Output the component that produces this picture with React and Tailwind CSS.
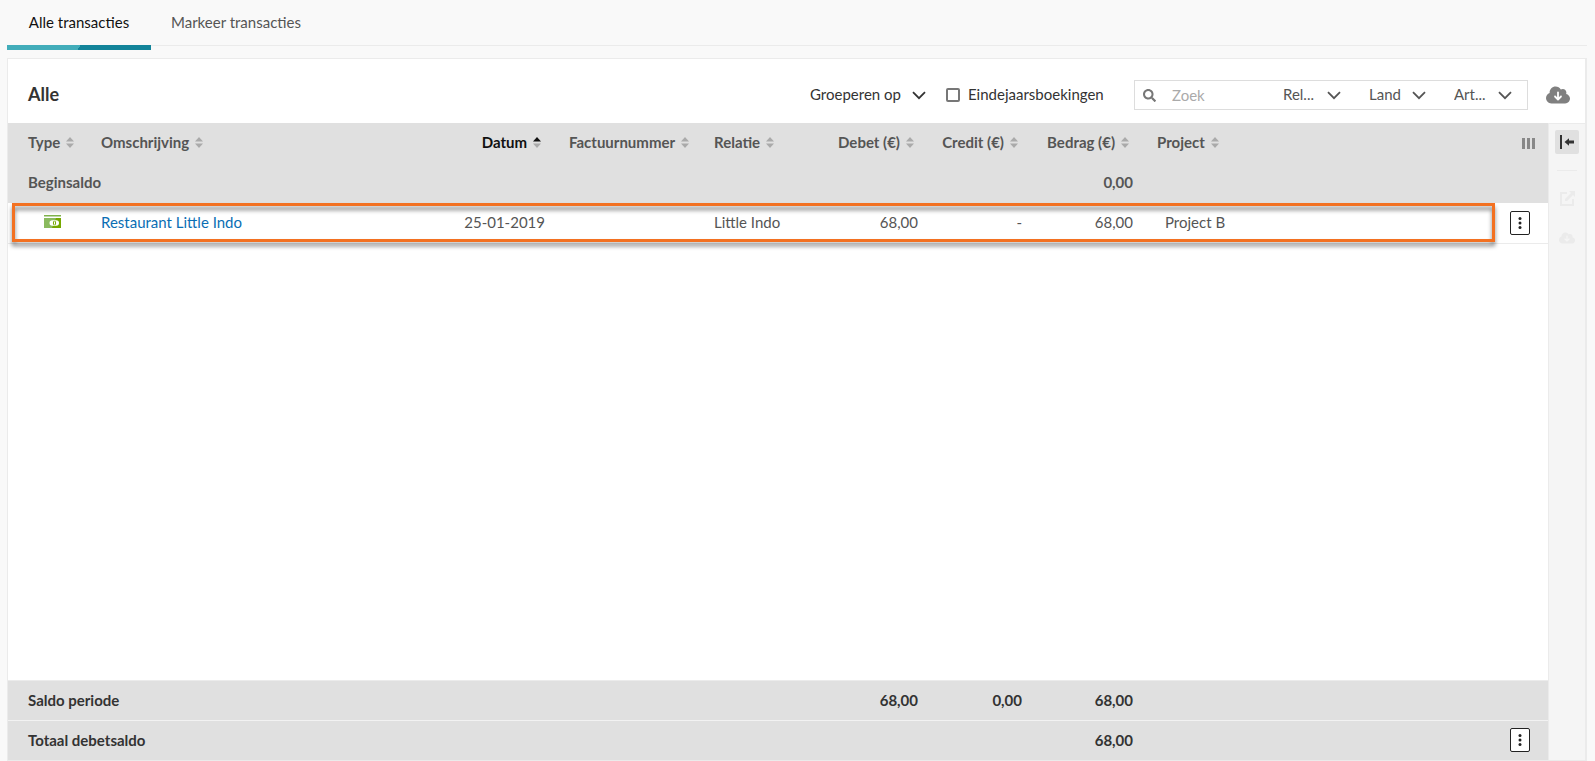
import React from 'react';
import { FaSearch } from 'react-icons/fa';
import { FaCloudArrowDown } from 'react-icons/fa6';

const columns = [
    { label: 'Type', first: true },
    { label: 'Omschrijving' },
    { label: 'Datum', right: true, sorted: true },
    { label: 'Factuurnummer' },
    { label: 'Relatie' },
    { label: 'Debet (€)', right: true },
    { label: 'Credit (€)', right: true },
    { label: 'Bedrag (€)', right: true },
    { label: 'Project' },
];

const Chevron = ({ className = '' }) => (
    <svg viewBox="0 0 14 9" className={`w-[14px] h-[9px] pointer-events-none ${className}`} fill="none" stroke="currentColor" strokeWidth="1.8">
        <path d="M1 1.2 7 7.2 13 1.2" />
    </svg>
);

const SortIcon = ({ sorted }) => (
    <svg viewBox="0 0 8 11" className="w-2 h-[11px] shrink-0">
        <path d="M4 0 8 4.6H0Z" fill={sorted ? '#111' : '#aaa'} />
        <path d="M4 11 8 6.4H0Z" fill="#aaa" />
    </svg>
);

// Banknote icon for cash transactions
const CashIcon = () => (
    <svg viewBox="0 0 17 13" className="w-[17px] h-[13px] ml-4" role="img" aria-label="Kas">
        <rect width="17" height="1.5" fill="#7fb24c" />
        <rect y="3" width="17" height="10" fill="#8aba5e" />
        <path d="M17 3v10H8L12 3Z" fill="#76a800" />
        <rect x="5.5" y="5.2" width="9.5" height="5.6" rx="2.8" fill="#fff" />
        <ellipse cx="10.5" cy="8" rx="1.6" ry="2.2" fill="#76a800" />
        <path d="M10 6.5h1v3h-1Z" fill="#fff" />
    </svg>
);

const MoreButton = () => (
    <button aria-label="Meer acties" className="flex items-center justify-center w-5 h-6 bg-white border border-[#222] rounded-xs cursor-pointer">
        <svg viewBox="0 0 4 12" className="w-1 h-3" fill="#222">
            <circle cx="2" cy="1.6" r="1.5" />
            <circle cx="2" cy="6" r="1.5" />
            <circle cx="2" cy="10.4" r="1.5" />
        </svg>
    </button>
);

const Filter = ({ label, text, className }) => (
    <div className={`relative flex items-center ${className}`}>
        <select aria-label={label} className="appearance-none w-full pb-0.5 bg-transparent focus:outline-none cursor-pointer">
            <option>{text}</option>
        </select>
        <Chevron className="absolute right-0" />
    </div>
);

const Columns = () => (
    <colgroup>
        <col className="w-[81px]" />
        <col className="w-[368px]" />
        <col className="w-[100px]" />
        <col className="w-[145px]" />
        <col className="w-[124px]" />
        <col className="w-[104px]" />
        <col className="w-[104px]" />
        <col className="w-[111px]" />
        <col />
        <col className="w-[58px]" />
    </colgroup>
);

const Tabs = () => (
    <nav className="flex h-[50px] ml-[7px] mr-2">
        <button className="relative px-5 pb-1.5 w-[144px] text-[#111] whitespace-nowrap cursor-pointer">
            Alle transacties
            <span className="absolute left-0 bottom-0 w-full h-[5px] bg-[linear-gradient(120deg,#42adba_50%,#13849a_50%)]"></span>
        </button>
        <div className="flex-1 flex h-[46px] border-b border-[#ebebeb]">
            <button className="px-5 pb-0.5 text-[#555] cursor-pointer">Markeer transacties</button>
        </div>
    </nav>
);

const Toolbar = () => (
    <div className="flex items-center h-16 pl-5 pr-[15px] pt-2 text-[#333]">
        <h1 className="text-lg font-bold leading-5 mr-auto pb-0.5">Alle</h1>
        <Filter label="Groeperen op" text="Groeperen op" className="w-[116px] mr-5" />
        <label className="flex items-center gap-2 mr-7">
            <input type="checkbox" className="appearance-none w-[14px] h-[14px] border-2 border-[#777] rounded-xs checked:bg-[#777]" />
            <span className="w-[138px] pb-0.5">Eindejaarsboekingen</span>
        </label>
        <div className="flex items-center h-[30px] w-[394px] pl-2 pr-[15px] border border-[#ddd] text-[#555]">
            <FaSearch size={13} className="text-[#777] shrink-0" />
            <input type="text" aria-label="Zoek" placeholder="Zoek" className="flex-1 min-w-0 px-4 placeholder-[#aaa] focus:outline-none" />
            <div className="flex gap-7">
                <Filter label="Relatie" text="Rel..." className="w-[58px]" />
                <Filter label="Land" text="Land" className="w-[57px]" />
                <Filter label="Artikel" text="Art..." className="w-[58px]" />
            </div>
        </div>
        <button aria-label="Downloaden" className="ml-[18px] text-[#808080] cursor-pointer">
            <FaCloudArrowDown size={24} />
        </button>
    </div>
);

const Transactions = () => (
    <table className="w-full table-fixed text-left whitespace-nowrap">
        <Columns />
        <thead className="bg-[#e0e0e0] text-[#555] font-bold">
            <tr className="h-10">
                {columns.map((col) => (
                    <th key={col.label} scope="col" className={col.first ? 'pl-5' : 'px-3'}>
                        <button className={`flex items-center gap-1.5 pb-0.5 cursor-pointer ${col.right ? 'ml-auto mr-1' : ''} ${col.sorted ? 'text-[#111]' : ''}`}>
                            {col.label}
                            <SortIcon sorted={col.sorted} />
                        </button>
                    </th>
                ))}
                <th scope="col">
                    <button aria-label="Kolommen" className="flex gap-[2px] ml-8 cursor-pointer">
                        <span className="w-[3px] h-[11px] bg-[#888]"></span>
                        <span className="w-[3px] h-[11px] bg-[#888]"></span>
                        <span className="w-[3px] h-[11px] bg-[#888]"></span>
                    </button>
                </th>
            </tr>
            <tr className="h-10">
                <th scope="row" colSpan={2} className="pl-5 pb-0.5">Beginsaldo</th>
                <td colSpan={5}></td>
                <td className="px-3 pb-0.5 text-right">0,00</td>
                <td colSpan={2}></td>
            </tr>
        </thead>
        <tbody className="text-[#555]">
            <tr className="relative h-10 border-b border-[#ebebeb]">
                <td className="pl-5 pb-0.5">
                    <CashIcon />
                    <span className="absolute left-1 right-[53px] inset-y-0 border-3 border-[#f37121] drop-shadow-[0_4px_2px_rgba(0,0,0,0.5)] pointer-events-none"></span>
                </td>
                <td className="px-3 pb-0.5">
                    <a href="#" className="text-[#0a6eb4]">Restaurant Little Indo</a>
                </td>
                <td className="pr-3 pb-0.5 text-right">25-01-2019</td>
                <td></td>
                <td className="px-3 pb-0.5">Little Indo</td>
                <td className="px-3 pb-0.5 text-right">68,00</td>
                <td className="px-3 pb-0.5 text-right">-</td>
                <td className="px-3 pb-0.5 text-right">68,00</td>
                <td className="pl-5 pb-0.5">Project B</td>
                <td className="pl-5"><MoreButton /></td>
            </tr>
        </tbody>
    </table>
);

const Totals = () => (
    <table className="w-full table-fixed text-left bg-[#e0e0e0] text-[#333] font-bold mt-auto">
        <Columns />
        <tbody>
            <tr className="h-10 border-t border-[#ebebeb]">
                <th scope="row" colSpan={2} className="pl-5">Saldo periode</th>
                <td colSpan={3}></td>
                <td className="px-3 text-right">68,00</td>
                <td className="px-3 text-right">0,00</td>
                <td className="px-3 text-right">68,00</td>
                <td colSpan={2}></td>
            </tr>
            <tr className="h-10 border-t border-[#f2f2f2]">
                <th scope="row" colSpan={2} className="pl-5">Totaal debetsaldo</th>
                <td colSpan={5}></td>
                <td className="px-3 text-right">68,00</td>
                <td></td>
                <td className="pl-5"><MoreButton /></td>
            </tr>
        </tbody>
    </table>
);

const SideBar = () => (
    <aside className="flex flex-col items-center w-[37px] bg-[#f5f5f5] border-l border-t border-[#ebebeb] pt-[6px] text-[#ebebeb]">
        <button aria-label="Paneel openen" className="flex items-center justify-center w-6 h-6 bg-[#e0e0e0] rounded-xs cursor-pointer">
            <svg viewBox="0 0 14 14" className="w-[14px] h-[14px]" fill="#333">
                <path d="M0 0h2v14H0ZM4.5 7 9 3.2v2.3h5v3H9v2.3Z" />
            </svg>
        </button>
        <hr className="w-5 my-4 border-[#ebebeb]" />
        <button aria-label="Bewerken" className="mt-1">
            <svg viewBox="0 0 15 15" className="w-[15px] h-[15px]" fill="currentColor">
                <path d="M0 1h7v2H2v10h10V8h2v7H0ZM9 0h6v6l-2-2-6 6H5V8l6-6Z" />
            </svg>
        </button>
        <button aria-label="Downloaden" className="mt-6">
            <FaCloudArrowDown size={16} />
        </button>
    </aside>
);

const App = () => {
    return (
        <div className="flex flex-col min-h-screen bg-[#f9f9f9] font-['Lato',sans-serif] text-[15px] leading-5">
            <Tabs />
            <main className="flex-1 flex flex-col mt-2 ml-[7px] mr-2 bg-white border border-r-2 border-[#ebebeb]">
                <Toolbar />
                <div className="flex-1 flex">
                    <div className="flex-1 min-w-0 flex flex-col">
                        <Transactions />
                        <Totals />
                    </div>
                    <SideBar />
                </div>
            </main>
        </div>
    );
};

export default App;
